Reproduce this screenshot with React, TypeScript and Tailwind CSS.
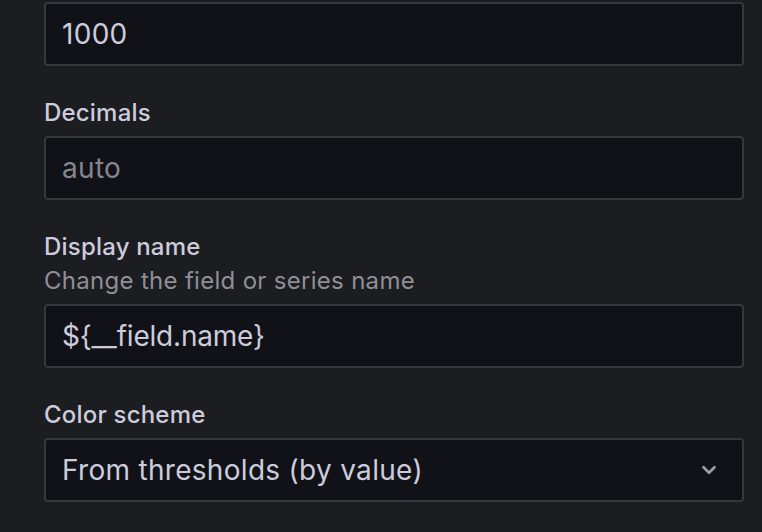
import { ChevronDown } from 'lucide-react';

const font = { fontFamily: 'Inter, "Noto Sans", sans-serif' };

function TextInput({ value, placeholder, tight }: { value?: string; placeholder?: string; tight?: boolean }) {
  return (
    <div className="h-[64px] w-full flex items-center px-[16px] bg-[#111217] border-2 border-[#37383e] rounded-[4px]">
      {value ? (
        <span className={`text-[28px] text-[#ccccdc] ${tight ? 'tracking-[-0.2px]' : 'tracking-[0.3px]'}`}>{value}</span>
      ) : (
        <span className="text-[28px] tracking-[0.3px] text-[#85868d]">{placeholder}</span>
      )}
    </div>
  );
}

function Label({ children }: { children: React.ReactNode }) {
  return <div className="text-[24px] leading-[24px] tracking-[0.2px] font-medium text-[#ccccdc]">{children}</div>;
}

export default function App() {
  return (
    <div className="w-[762px] h-[532px] overflow-hidden bg-[#1c1d21] pl-[44px] pr-[18px] pt-[2px]" style={font}>
      <div className="flex flex-col">
        <TextInput value="1000" />

        <div className="mt-[35px] flex flex-col">
          <Label>Decimals</Label>
          <div className="mt-[11px]">
            <TextInput placeholder="auto" />
          </div>
        </div>

        <div className="mt-[35px] flex flex-col">
          <Label>Display name</Label>
          <div className="mt-[10px] text-[24px] leading-[24px] tracking-[0.3px] text-[#8e8f97]">
            Change the field or series name
          </div>
          <div className="mt-[11px]">
            <TextInput value="${__field.name}" tight />
          </div>
        </div>

        <div className="mt-[35px] flex flex-col">
          <Label>Color scheme</Label>
          <div className="mt-[11px] h-[64px] w-full flex items-center justify-between pl-[16px] pr-[22px] bg-[#111217] border-2 border-[#37383e] rounded-[4px]">
            <span className="text-[28px] tracking-[0.3px] text-[#ccccdc]">From thresholds (by value)</span>
            <ChevronDown size={22} strokeWidth={3} className="text-[#9c9da4]" />
          </div>
        </div>
      </div>
    </div>
  );
}
